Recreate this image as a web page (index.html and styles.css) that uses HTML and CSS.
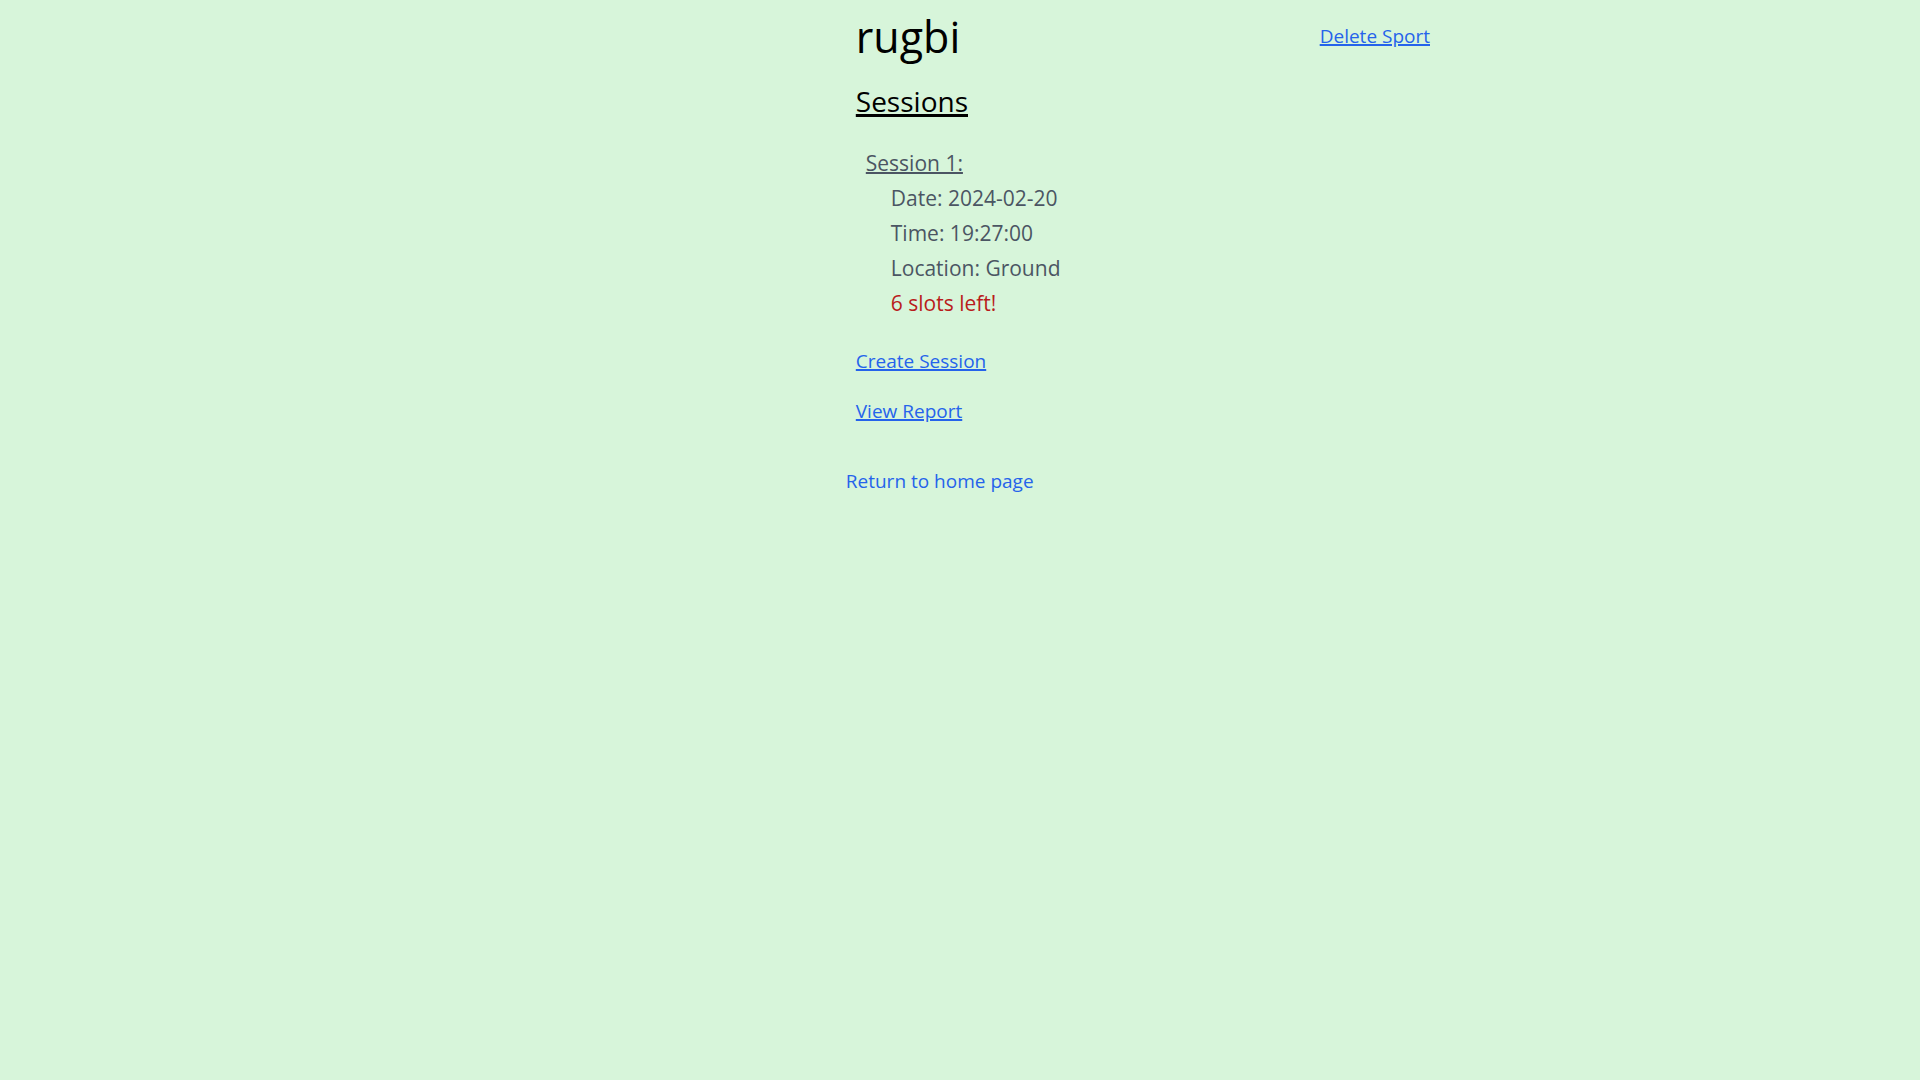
FILE: index.html
```html
<!DOCTYPE html>
<html lang="en">
<head>
  <meta charset="utf-8">
  <meta name="viewport" content="width=device-width, initial-scale=1">
  <title>rugbi</title>
  <link rel="stylesheet" href="styles.css">
</head>
<body>
  <main class="page">
    <header class="page-header">
      <h1 class="sport-name">rugbi</h1>
      <a class="link" href="#">Delete Sport</a>
    </header>
    <section class="sessions">
      <h2 class="sessions-title">Sessions</h2>
      <article class="session">
        <h3 class="session-title">Session 1:</h3>
        <ul class="session-details">
          <li>Date: 2024-02-20</li>
          <li>Time: 19:27:00</li>
          <li>Location: Ground</li>
          <li class="slots">6 slots left!</li>
        </ul>
      </article>
    </section>
    <nav class="actions">
      <a class="link" href="#">Create Session</a>
      <a class="link" href="#">View Report</a>
    </nav>
    <a class="home-link" href="#">Return to home page</a>
  </main>
</body>
</html>
```
FILE: styles.css
```css
* {
  box-sizing: border-box;
  margin: 0;
  padding: 0;
}

body {
  min-height: 100vh;
  background: #d7f5da;
  color: #000;
  font-family: "Segoe UI", "Open Sans", "Noto Sans", sans-serif;
  font-size: 19px;
  line-height: 30px;
}

.page {
  margin-left: 44%;
  margin-right: 25%;
  padding: 8px 0 8px 1px;
}

.page-header {
  display: flex;
  justify-content: space-between;
  align-items: flex-start;
  padding: 4px 10px 9px;
}

.sport-name {
  font-size: 43px;
  font-weight: 400;
  line-height: 50px;
}

.page-header .link {
  padding-top: 9px;
}

.sessions {
  padding: 10px;
}

.sessions-title {
  font-size: 28px;
  font-weight: 400;
  line-height: 40px;
  text-decoration: underline 3px;
}

.session {
  padding: 25px 10px 15px;
  color: #4b5563;
  font-size: 21px;
  line-height: 35px;
}

.session-title {
  font-size: 21px;
  font-weight: 400;
  text-decoration: underline 2px;
}

.session-details {
  padding-left: 25px;
  list-style: none;
}

.slots {
  color: #b91c1c;
}

.actions {
  display: flex;
  flex-direction: column;
  align-items: flex-start;
  gap: 20px;
  padding: 0 10px;
}

.link {
  color: #2563eb;
  text-decoration: underline 2px;
}

.home-link {
  display: inline-block;
  margin-top: 40px;
  color: #2563eb;
  text-decoration: none;
}
```
